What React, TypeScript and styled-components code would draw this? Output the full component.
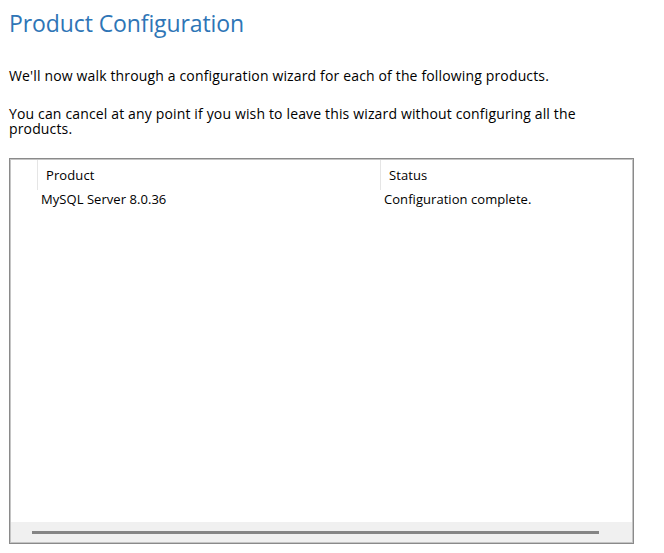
import React from "react";
import styled, { createGlobalStyle } from "styled-components";

const Global = createGlobalStyle`
  html, body { margin: 0; padding: 0; background: #ffffff; }
  body { font-family: "Open Sans", "Noto Sans", sans-serif; color: #000; }
`;

const Page = styled.div`
  width: 664px;
  height: 553px;
  box-sizing: border-box;
  padding: 8px 30px 0 9px;
  display: flex;
  flex-direction: column;
`;

const Title = styled.h1`
  margin: 0;
  font-family: "Open Sans", "Noto Sans", sans-serif;
  font-weight: 400;
  font-size: 23px;
  line-height: 30px;
  letter-spacing: -0.1px;
  color: #2e75b6;
`;

const Para = styled.p<{ $top: number }>`
  margin: ${(p) => p.$top}px 0 0 0;
  font-size: 14px;
  line-height: 15px;
  letter-spacing: 0.15px;
  max-width: 590px;
`;

const ListBox = styled.div`
  margin-top: 22px;
  width: 625px;
  height: 386px;
  box-sizing: border-box;
  border: 1px solid #8a8a8a;
  box-shadow: inset 0 0 0 1px #c4c4c4;
  padding: 1px;
  display: flex;
  flex-direction: column;
  background: #fff;
`;

const Grid = styled.div`
  flex: 1;
  display: grid;
  grid-template-columns: 26px 343px 1fr;
  grid-auto-rows: min-content;
`;

const HeadCell = styled.div<{ $sep?: boolean }>`
  height: 30px;
  display: flex;
  align-items: center;
  padding-left: 8px;
  font-size: 13px;
  letter-spacing: 0.1px;
  border-left: ${(p) => (p.$sep ? "1px solid #e5e5e5" : "none")};
`;

const Cell = styled.div`
  height: 18px;
  display: flex;
  align-items: center;
  padding-left: 4px;
  font-size: 13px;
  letter-spacing: 0.05px;
  white-space: nowrap;
`;

const Scrollbar = styled.div`
  height: 20px;
  background: #f0f0f0;
  display: flex;
  align-items: center;
  padding: 0 33px 0 21px;
`;

const Thumb = styled.div`
  flex: 1;
  height: 3px;
  background: #858585;
`;

export default function App() {
  return (
    <>
      <Global />
      <Page>
        <Title>Product Configuration</Title>
        <Para $top={30}>
          We'll now walk through a configuration wizard for each of the following products.
        </Para>
        <Para $top={23}>
          You can cancel at any point if you wish to leave this wizard without configuring all the products.
        </Para>
        <ListBox>
          <Grid>
            <HeadCell />
            <HeadCell $sep>Product</HeadCell>
            <HeadCell $sep>Status</HeadCell>
            <Cell />
            <Cell>MySQL Server 8.0.36</Cell>
            <Cell>Configuration complete.</Cell>
          </Grid>
          <Scrollbar>
            <Thumb />
          </Scrollbar>
        </ListBox>
      </Page>
    </>
  );
}
